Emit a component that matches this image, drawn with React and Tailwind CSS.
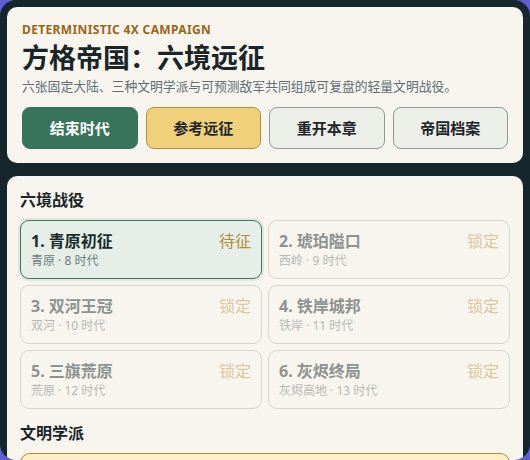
import React from "react";

const stages = [
  { no: 1, name: "青原初征", meta: "青原 · 8 时代", status: "待征", active: true },
  { no: 2, name: "琥珀隘口", meta: "西岭 · 9 时代", status: "锁定" },
  { no: 3, name: "双河王冠", meta: "双河 · 10 时代", status: "锁定" },
  { no: 4, name: "铁岸城邦", meta: "铁岸 · 11 时代", status: "锁定" },
  { no: 5, name: "三旗荒原", meta: "荒原 · 12 时代", status: "锁定" },
  { no: 6, name: "灰烬终局", meta: "灰烬高地 · 13 时代", status: "锁定" },
];

function StageCard({ s }) {
  const box = s.active
    ? "border-[#3f7a5e] bg-[#e5efe7] shadow-[0_0_0_2px_rgba(63,122,94,0.12)]"
    : "border-[#d6d6cd] bg-[#f7f5ee]";
  return (
    <div className={`rounded-[9px] border px-[10px] pt-[9px] pb-[9px] ${box}`}>
      <div className="flex items-center justify-between">
        <span
          className={`text-[16px] leading-[22px] font-bold ${
            s.active ? "text-[#1c2a2e]" : "text-[#8e9390]"
          }`}
        >
          {s.no}. {s.name}
        </span>
        <span
          className={`text-[16px] leading-[22px] ${
            s.active ? "text-[#b4893a]" : "text-[#dcc79d]"
          }`}
        >
          {s.status}
        </span>
      </div>
      <div
        className={`mt-[1px] text-[12px] leading-[16px] ${
          s.active ? "text-[#6e7c7d]" : "text-[#b6b9b4]"
        }`}
      >
        {s.meta}
      </div>
    </div>
  );
}

export default function App() {
  return (
    <div
      className="h-[460px] w-[530px] overflow-hidden bg-[#5f5ed6]"
      style={{ fontFamily: '"Noto Sans", "Noto Sans CJK SC", sans-serif' }}
    >
      <div className="h-[460px] overflow-hidden rounded-[16px] bg-[#15262d] p-[7px]">
        <section className="rounded-[10px] bg-[#f7f5ee] px-[15px] pt-[15px] pb-[14px]">
          <div className="text-[12px] leading-[16px] font-bold tracking-[0.03em] text-[#99661a] uppercase">
            Deterministic 4X Campaign
          </div>
          <h1 className="mt-[4px] text-[27px] leading-[32px] font-bold text-[#1a2529]">
            方格帝国：六境远征
          </h1>
          <p className="mt-[2px] text-[12.8px] leading-[20px] text-[#5d6e75]">
            六张固定大陆、三种文明学派与可预测敌军共同组成可复盘的轻量文明战役。
          </p>
          <div className="mt-[11px] grid grid-cols-4 gap-[8px]">
            <button className="h-[42px] rounded-[8px] border border-[#35735a] bg-[#37745b] text-[15px] font-bold text-white">
              结束时代
            </button>
            <button className="h-[42px] rounded-[8px] border border-[#b78f3c] bg-[#f0d07b] text-[15px] font-bold text-[#1f2629]">
              参考远征
            </button>
            <button className="h-[42px] rounded-[8px] border border-[#8d9b96] bg-[#edefe9] text-[15px] font-bold text-[#1f2629]">
              重开本章
            </button>
            <button className="h-[42px] rounded-[8px] border border-[#8d9b96] bg-[#edefe9] text-[15px] font-bold text-[#1f2629]">
              帝国档案
            </button>
          </div>
        </section>

        <section className="mt-[13px] rounded-[10px] bg-[#f7f5ee] px-[13px] pt-[12px] pb-[14px]">
          <h2 className="text-[16px] leading-[24px] font-bold text-[#1a2529]">六境战役</h2>
          <div className="mt-[8px] grid grid-cols-2 gap-[6px]">
            {stages.map((s) => (
              <StageCard key={s.no} s={s} />
            ))}
          </div>
          <h2 className="mt-[12px] text-[16px] leading-[24px] font-bold text-[#1a2529]">文明学派</h2>
          <div className="mt-[8px] h-[80px] rounded-[10px] border border-[#b98a2e] bg-[#fdf0c6]" />
        </section>
      </div>
    </div>
  );
}
